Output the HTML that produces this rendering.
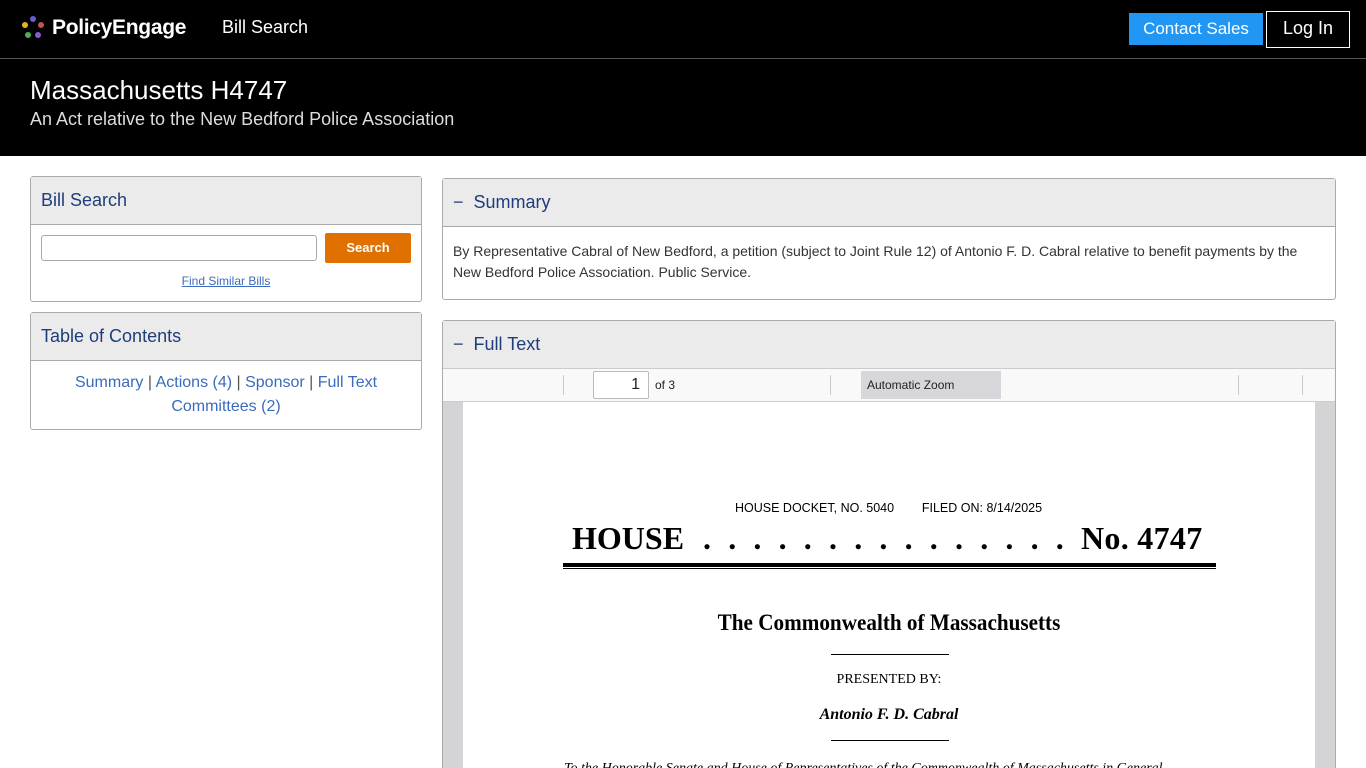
<!DOCTYPE html>
<html><head><meta charset="utf-8">
<style>
*{box-sizing:border-box;margin:0;padding:0}
html,body{width:1366px;height:768px;overflow:hidden}
body{background:#fff;font-family:"Liberation Sans",Arial,sans-serif;color:#333;position:relative}
.nav{height:59px;background:#000;border-bottom:1px solid #555;position:relative}
.logo{position:absolute;left:22px;top:16px;display:flex;align-items:center}
.logo span{color:#fff;font-weight:bold;font-size:21px;margin-left:8px;letter-spacing:-0.3px}
.navlink{position:absolute;left:222px;top:17px;color:#fff;font-size:18px}
.cs{position:absolute;left:1129px;top:13px;width:134px;height:32px;background:#2196f3;color:#fff;font-size:17px;text-align:center;line-height:32px}
.li{position:absolute;left:1266px;top:11px;width:84px;height:37px;border:1px solid #fff;color:#fff;font-size:18px;text-align:center;line-height:32px;background:#000}
.hero{height:97px;background:#000;color:#fff;padding:16px 30px}
.hero h1{font-weight:normal;font-size:26px;line-height:30px}
.hero p{font-size:18px;color:#ddd;margin-top:4px}
.panel{position:absolute;border:1px solid #aaa;border-radius:3px;background:#fff}
.ph{background:#ebebeb;border-bottom:1px solid #aaa;color:#1f3d7a;font-size:18px;padding:0 10px;height:48px;line-height:46px}
a{color:#3a6bbd;text-decoration:none}
.pdf{position:absolute;left:443px;top:368px;width:892px;height:400px;background:#d4d4d7;overflow:hidden}
.tb{height:34px;background:#f9f9fa;border-bottom:1px solid #ccc;border-top:1px solid #ccc;position:relative;font-size:12px;color:#222}
.sep{position:absolute;top:6px;width:1px;height:20px;background:#ccc}
.page{position:absolute;left:20px;top:34px;width:852px;height:370px;background:#fff;font-family:"Liberation Serif",serif;color:#000}
</style></head><body>
<div class="nav">
 <div class="logo"><svg width="22" height="24" viewBox="0 0 22 24"><circle cx="11" cy="3" r="3" fill="#6a5acd"/><circle cx="3" cy="9" r="3" fill="#e6b422"/><circle cx="19" cy="9" r="3" fill="#c0505a"/><circle cx="6" cy="19" r="3" fill="#4caf50"/><circle cx="16" cy="19" r="3" fill="#8e5ac8"/></svg><span>PolicyEngage</span></div>
 <div class="navlink">Bill Search</div>
 <div class="cs">Contact Sales</div>
 <div class="li">Log In</div>
</div>
<div class="hero"><h1>Massachusetts H4747</h1><p>An Act relative to the New Bedford Police Association</p></div>

<div class="panel" style="left:30px;top:176px;width:392px;height:126px">
 <div class="ph">Bill Search</div>
 <div style="position:absolute;left:10px;top:58px;width:276px;height:26px;border:1px solid #aaa;border-radius:3px"></div>
 <div style="position:absolute;left:294px;top:56px;width:86px;height:30px;background:#e07000;color:#fff;font-weight:bold;font-size:13px;text-align:center;line-height:30px;border-radius:2px">Search</div>
 <div style="position:absolute;left:0;width:390px;top:97px;text-align:center;font-size:12px"><a style="text-decoration:underline">Find Similar Bills</a></div>
</div>
<div class="panel" style="left:30px;top:312px;width:392px;height:118px">
 <div class="ph">Table of Contents</div>
 <div style="text-align:center;font-size:16px;line-height:24px;padding-top:10px;color:#555"><a>Summary</a> | <a>Actions (4)</a> | <a>Sponsor</a> | <a>Full Text</a><br><a>Committees (2)</a></div>
</div>

<div class="panel" style="left:442px;top:178px;width:894px;height:122px">
 <div class="ph">− &nbsp;Summary</div>
 <div style="padding:14px 10px;font-size:14px;line-height:21px;color:#333">By Representative Cabral of New Bedford, a petition (subject to Joint Rule 12) of Antonio F. D. Cabral relative to benefit payments by the New Bedford Police Association. Public Service.</div>
</div>
<div class="panel" style="left:442px;top:320px;width:894px;height:460px">
 <div class="ph">− &nbsp;Full Text</div>
</div>
<div class="pdf">
 <div class="tb">
  <div class="sep" style="left:120px"></div>
  <div style="position:absolute;left:150px;top:2px;width:56px;height:28px;border:1px solid #bbb;border-radius:2px;background:#fff;text-align:right;padding-right:8px;line-height:26px;font-size:16px">1</div>
  <div style="position:absolute;left:212px;top:9px">of 3</div>
  <div class="sep" style="left:387px"></div>
  <div style="position:absolute;left:418px;top:2px;width:140px;height:28px;background:#d7d7db;line-height:28px;padding-left:6px">Automatic Zoom</div>
  <div class="sep" style="left:795px"></div>
  <div class="sep" style="left:859px"></div>
 </div>
 <div class="page">
  <div style="position:absolute;left:272px;top:99px;font-family:'Liberation Sans',sans-serif;font-size:12.5px;white-space:nowrap">HOUSE DOCKET, NO. 5040 &nbsp;&nbsp;&nbsp;&nbsp;&nbsp;&nbsp;&nbsp;FILED ON: 8/14/2025</div>
  <div style="position:absolute;left:109px;top:118px;font-size:32px;font-weight:bold">HOUSE</div>
  <div style="position:absolute;left:240px;top:118px;font-size:32px;font-weight:bold;letter-spacing:17.2px;white-space:nowrap">...............</div>
  <div style="position:absolute;left:618px;top:118px;font-size:32px;font-weight:bold;letter-spacing:0.3px">No. 4747</div>
  <div style="position:absolute;left:100px;top:161px;width:653px;height:4px;background:#000"></div>
  <div style="position:absolute;left:100px;top:166px;width:653px;height:1px;background:#000"></div>
  <div style="position:absolute;left:0;width:852px;top:208px;text-align:center;font-size:23px;font-weight:bold;transform:scaleX(.92)">The Commonwealth of Massachusetts</div>
  <div style="position:absolute;left:368px;top:252px;width:118px;height:1px;background:#000"></div>
  <div style="position:absolute;left:0;width:852px;top:270px;text-align:center;font-size:14px">PRESENTED BY:</div>
  <div style="position:absolute;left:0;width:852px;top:304px;text-align:center;font-size:16px;font-weight:bold;font-style:italic">Antonio F. D. Cabral</div>
  <div style="position:absolute;left:368px;top:338px;width:118px;height:1px;background:#000"></div>
  <div style="position:absolute;left:101px;top:359px;font-size:14px;font-style:italic;white-space:nowrap">To the Honorable Senate and House of Representatives of the Commonwealth of Massachusetts in General</div>
 </div>
</div>
</body></html>
